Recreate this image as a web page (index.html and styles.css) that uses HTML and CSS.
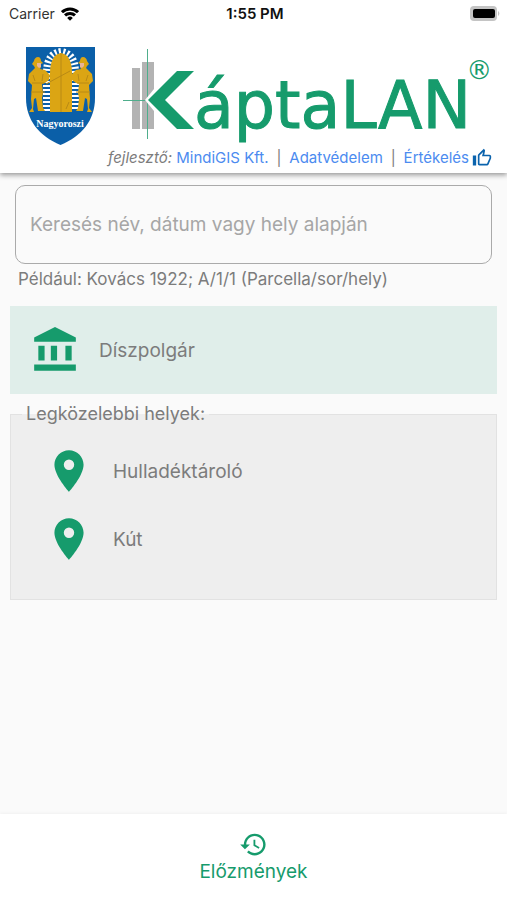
FILE: index.html
```
<!DOCTYPE html>
<html lang="hu">
  <head>
    <meta charset="utf-8" />
    <meta name="viewport" content="width=device-width, initial-scale=1" />
    <title>KáptaLAN</title>
    <link rel="stylesheet" href="styles.css">
  </head>
  <body>
    <div class="status-bar">
      <div class="carrier">
        <span>Carrier</span>
        <svg class="wifi" viewBox="0 0 18 14" aria-hidden="true">
          <path d="M1 5.2a11.5 11.5 0 0 1 16 0" />
          <path d="M4 8.4a7.2 7.2 0 0 1 10 0" />
          <path class="wifi-dot" d="M9 13.8 6.2 10.9a4 4 0 0 1 5.6 0z" />
        </svg>
      </div>
      <div class="clock">1:55 PM</div>
      <svg class="battery" viewBox="0 0 31 15" aria-hidden="true">
        <rect x="0" y="0" width="27" height="15" rx="4" fill="#c4c4c4" />
        <path d="M28 5a3 3 0 0 1 0 5z" fill="#c4c4c4" />
        <rect x="3" y="3" width="22" height="9" rx="2" fill="#000" />
      </svg>
    </div>

    <header class="header">
      <svg class="crest" viewBox="0 0 69 98" aria-hidden="true">
        <path fill="#0b5fa8" d="M0 0h69v51c0 22-13 38-34.5 47C13 89 0 73 0 51z" />
        <path class="arch-stones" d="M21 64V26C21 11 27 6 35 5c8 1 14 6 14 21v38" />
        <path fill="#dba514" d="M24 65V26c0-12 4-19 11-20 7 1 11 8 11 20v39z" />
        <path class="gate-lines" d="M35 6v59M20 37l24-13M40 62l3-7" />
        <g id="guard">
          <path fill="#dba514" d="M8 14c0-2 2-4 4-4s3 2 3 4l2 2-2 1v3l-1 2 5 1 5 5-1 5-4 3-3 1 1 9-1 5 1 10 2 3h-7l-2-13-2 1-1 10 1 3H3l3-4-1-9 1-14-4-4 1-7 4-4 2-2-1-2-2-2z" />
          <path fill="#e9b49a" d="M11 16h4v4l-2 1-2-2z" />
          <path class="guard-lines" d="M6 36h12M7 28l2 6M17 27l-1 7M5 45h14" />
        </g>
        <g transform="translate(69 0) scale(-1 1)">
          <use href="#guard" />
        </g>
        <text class="crest-name" x="34" y="80">Nagyoroszi</text>
      </svg>

      <div class="header-main">
        <h1 class="brand" aria-label="KáptaLAN">
          <svg class="brand-mark" viewBox="0 0 71 92" aria-hidden="true">
            <path fill="#b3b3b3" d="M9 20h8v61H9zM19 14h12v67H19z" />
            <path fill="#4fae8c" d="M24 1h1v90h-1zM0 52h25v1H0z" />
            <path fill="#fff" d="M22 52 31 41v22z" />
            <path fill="#169b6c" d="M25 52 54 23h17L42 52l29 29H54z" />
          </svg>
          <span class="brand-name">áptaLAN</span>
          <span class="brand-reg">®</span>
        </h1>
        <nav class="links">
          <span><em>fejlesztő:</em> <a href="#mindigis">MindiGIS Kft.</a></span>
          <span class="divider">|</span>
          <a href="#adatvedelem">Adatvédelem</a>
          <span class="divider">|</span>
          <a class="rate" href="#ertekeles">Értékelés
            <svg viewBox="0 0 24 24" aria-hidden="true"><path d="M9 21h9c.83 0 1.54-.5 1.84-1.22l3.02-7.05c.09-.23.14-.47.14-.73v-2c0-1.1-.9-2-2-2h-6.31l.95-4.57.03-.32c0-.41-.17-.79-.44-1.06L14.17 1 7.58 7.59C7.22 7.95 7 8.45 7 9v10c0 1.1.9 2 2 2zM9 9l4.34-4.34L12 10h9v2l-3 7H9V9zM1 9h4v12H1z" /></svg>
          </a>
        </nav>
      </div>
    </header>

    <main class="content">
      <div class="search">
        <input type="text" id="search" placeholder="Keresés név, dátum vagy hely alapján" />
        <label for="search">Például: Kovács 1922; A/1/1 (Parcella/sor/hely)</label>
      </div>

      <button class="honorary" type="button">
        <svg class="icon" viewBox="0 0 24 24" aria-hidden="true"><path d="M4 10v7h3v-7H4zm6 0v7h3v-7h-3zM2 22h20v-3H2v3zM17 10v7h3v-7h-3zM12 1 2 6v2h20V6L12 1z" /></svg>
        Díszpolgár
      </button>

      <fieldset class="nearby">
        <legend>Legközelebbi helyek:</legend>
        <button class="place" type="button">
          <svg class="icon" viewBox="0 0 24 24" aria-hidden="true"><path d="M12 2C8.13 2 5 5.13 5 9c0 5.25 7 13 7 13s7-7.75 7-13c0-3.87-3.13-7-7-7zm0 9.5a2.5 2.5 0 0 1 0-5 2.5 2.5 0 0 1 0 5z" /></svg>
          Hulladéktároló
        </button>
        <button class="place" type="button">
          <svg class="icon" viewBox="0 0 24 24" aria-hidden="true"><path d="M12 2C8.13 2 5 5.13 5 9c0 5.25 7 13 7 13s7-7.75 7-13c0-3.87-3.13-7-7-7zm0 9.5a2.5 2.5 0 0 1 0-5 2.5 2.5 0 0 1 0 5z" /></svg>
          Kút
        </button>
      </fieldset>
    </main>

    <footer class="bottom-bar">
      <button class="history" type="button">
        <svg viewBox="0 0 24 24" aria-hidden="true"><path d="M13 3c-4.97 0-9 4.03-9 9H1l3.89 3.89.07.14L9 12H6c0-3.87 3.13-7 7-7s7 3.13 7 7-3.13 7-7 7c-1.93 0-3.68-.79-4.94-2.06l-1.42 1.42C8.27 19.99 10.51 21 13 21c4.97 0 9-4.03 9-9s-4.03-9-9-9zm-1 5v5l4.28 2.54.72-1.21-3.5-2.08V8H12z" /></svg>
        Előzmények
      </button>
    </footer>
  </body>
</html>
```
FILE: styles.css
```
* {
  box-sizing: border-box;
}
body {
  display: flex;
  flex-direction: column;
  min-height: 100vh;
  margin: 0;
  background-color: #fafafa;
  color: #7c7c7c;
  font-family: Inter, 'Liberation Sans', sans-serif;
  font-size: 18px;
}
button {
  padding: 0;
  border: 0;
  background: none;
  color: inherit;
  font: inherit;
  text-align: left;
  cursor: pointer;
}

/* status bar */
.status-bar {
  position: relative;
  z-index: 1;
  display: grid;
  grid-template-columns: 1fr auto 1fr;
  align-items: center;
  height: 27px;
  padding: 0 6px 0 9px;
  background-color: #fff;
  color: #111;
  font-size: 15px;
}
.carrier {
  display: flex;
  align-items: center;
  gap: 6px;
  color: #333;
  font-size: 14px;
}
.wifi {
  width: 18px;
  height: 14px;
  fill: none;
  stroke: #000;
  stroke-width: 3;
}
.wifi .wifi-dot {
  fill: #000;
  stroke: none;
}
.clock {
  font-weight: 600;
}
.battery {
  justify-self: end;
  width: 31px;
  height: 15px;
}

/* header */
.header {
  display: flex;
  gap: 13px;
  padding: 20px 15px 2px 26px;
  background-color: #fff;
  box-shadow: 0 2px 5px rgba(0, 0, 0, 0.4);
}
.crest {
  flex: none;
  width: 69px;
  height: 98px;
}
.arch-stones {
  fill: none;
  stroke: #fff;
  stroke-width: 8;
  stroke-dasharray: 2 2;
}
.gate-lines,
.guard-lines {
  fill: none;
  stroke: #b98a15;
  stroke-width: 1;
}
.crest-name {
  fill: #fff;
  font-family: 'Liberation Serif', serif;
  font-size: 10px;
  font-weight: bold;
  text-anchor: middle;
}
.header-main {
  flex: 1;
  min-width: 0;
}
.brand {
  display: flex;
  align-items: flex-end;
  margin: 0;
  padding: 1px 0 0 15px;
  color: #169b6c;
  font-family: 'DejaVu Sans', sans-serif;
  font-weight: normal;
}
.brand-mark {
  flex: none;
  width: 71px;
  height: 92px;
}
.brand-name {
  font-size: 65px;
  line-height: 68px;
  -webkit-text-stroke: 1px #169b6c;
}
.brand-reg {
  align-self: flex-start;
  margin-left: -5px;
  padding-top: 9px;
  font-size: 26px;
  line-height: 26px;
}
.links {
  display: flex;
  align-items: center;
  justify-content: space-between;
  height: 31px;
  padding-top: 4px;
  font-size: 15px;
}
.links a {
  color: #4c8bf0;
  text-decoration: none;
}
.links .rate {
  display: flex;
  align-items: center;
  gap: 3px;
}
.rate svg {
  width: 20px;
  height: 20px;
  fill: #0b63ad;
}

/* content */
.content {
  flex: 1;
  padding: 12px 10px;
}
.search {
  padding: 0 5px;
}
.search input {
  display: block;
  width: 100%;
  height: 79px;
  padding: 0 14px;
  border: 1px solid #aaa;
  border-radius: 10px;
  background: none;
  font: inherit;
  font-size: 19px;
}
.search input::placeholder {
  color: #a6a6a6;
  opacity: 1;
}
.search label {
  display: block;
  padding: 4px 3px 0;
  font-size: 17px;
  line-height: 22px;
}
.icon {
  flex: none;
  width: 50px;
  height: 50px;
  fill: #169b6c;
}
.honorary {
  display: flex;
  align-items: center;
  gap: 19px;
  width: 100%;
  height: 88px;
  margin: 16px 0 10px;
  padding: 0 20px;
  background-color: #e0eeea;
  font-size: 19px;
}
.nearby {
  margin: 0;
  padding: 13px 33px 26px;
  border: 1px solid #e2e2e2;
  background-color: #eee;
}
.nearby legend {
  margin-left: -22px;
  padding: 0 4px;
  line-height: 20px;
}
.place {
  display: flex;
  align-items: center;
  gap: 19px;
  width: 100%;
  height: 68px;
  font-size: 19px;
}

/* bottom bar */
.bottom-bar {
  display: flex;
  justify-content: center;
  height: 86px;
  padding-top: 16px;
  background-color: #fff;
  box-shadow: 0 -1px 3px rgba(0, 0, 0, 0.04);
}
.history {
  display: flex;
  flex-direction: column;
  align-items: center;
  gap: 1px;
  color: #169b6c;
  font-size: 19px;
}
.history svg {
  width: 29px;
  height: 29px;
  fill: #169b6c;
}
```
